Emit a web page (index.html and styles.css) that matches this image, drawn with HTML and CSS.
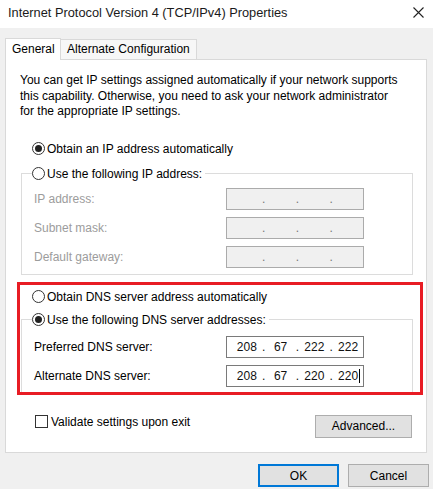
FILE: index.html
```html
<!DOCTYPE html>
<html>

<head>
    <meta charset="utf-8" />
    <title>Internet Protocol Version 4 (TCP/IPv4) Properties</title>
    <link rel="stylesheet" href="styles.css">
</head>

<body>
    <div class="window">
        <div class="titlebar">
            <span class="title">Internet Protocol Version 4 (TCP/IPv4) Properties</span>
            <svg class="close" width="11" height="11" viewBox="0 0 11 11">
                <path d="M0.5 0.5 L10.5 10.5 M10.5 0.5 L0.5 10.5" stroke="#222" stroke-width="1.1" fill="none" />
            </svg>
        </div>

        <div class="tabs">
            <div class="tab active">General</div>
            <div class="tab">Alternate Configuration</div>
        </div>

        <div class="panel">
            <p class="intro">You can get IP settings assigned automatically if your network supports this capability. Otherwise, you need to ask your network administrator for the appropriate IP settings.</p>

            <label class="radio standalone"><span class="mark checked"></span>Obtain an IP address automatically</label>

            <fieldset class="group">
                <legend><label class="radio"><span class="mark"></span>Use the following IP address:</label></legend>
                <div class="field disabled">
                    <span class="name">IP address:</span>
                    <div class="ipbox"><span class="oct"></span><span class="dot">.</span><span class="oct"></span><span class="dot">.</span><span class="oct"></span><span class="dot">.</span><span class="oct"></span></div>
                </div>
                <div class="field disabled">
                    <span class="name">Subnet mask:</span>
                    <div class="ipbox"><span class="oct"></span><span class="dot">.</span><span class="oct"></span><span class="dot">.</span><span class="oct"></span><span class="dot">.</span><span class="oct"></span></div>
                </div>
                <div class="field disabled">
                    <span class="name">Default gateway:</span>
                    <div class="ipbox"><span class="oct"></span><span class="dot">.</span><span class="oct"></span><span class="dot">.</span><span class="oct"></span><span class="dot">.</span><span class="oct"></span></div>
                </div>
            </fieldset>

            <label class="radio standalone dns"><span class="mark"></span>Obtain DNS server address automatically</label>

            <fieldset class="group dns-group">
                <legend><label class="radio"><span class="mark checked"></span>Use the following DNS server addresses:</label></legend>
                <div class="field">
                    <span class="name">Preferred DNS server:</span>
                    <div class="ipbox"><span class="oct">208</span><span class="dot">.</span><span class="oct">67</span><span class="dot">.</span><span class="oct">222</span><span class="dot">.</span><span class="oct">222</span></div>
                </div>
                <div class="field">
                    <span class="name">Alternate DNS server:</span>
                    <div class="ipbox"><span class="oct">208</span><span class="dot">.</span><span class="oct">67</span><span class="dot">.</span><span class="oct">220</span><span class="dot">.</span><span class="oct"><span class="caret">220</span></span></div>
                </div>
            </fieldset>

            <div class="footer">
                <label class="check"><span class="box"></span>Validate settings upon exit</label>
                <button class="btn advanced">Advanced...</button>
            </div>

            <!-- annotation drawn over the DNS section -->
            <div class="highlight"></div>
        </div>

        <div class="actions">
            <button class="btn default">OK</button>
            <button class="btn">Cancel</button>
        </div>
    </div>
</body>

</html>
```

FILE: styles.css
```css
* {
    box-sizing: border-box;
}

body {
    margin: 0;
    background: #f0f0f0;
    font-family: "Liberation Sans", Arial, sans-serif;
    font-size: 12px;
    color: #000;
}

.window {
    width: 433px;
    height: 489px;
    overflow: hidden;
}

.titlebar {
    height: 28px;
    background: #fff;
    display: flex;
    align-items: center;
    justify-content: space-between;
    padding: 0 9px 3px 8px;
}

.title {
    font-size: 12.8px;
    color: #1a1a1a;
}

.tabs {
    display: flex;
    align-items: flex-end;
    height: 31px;
    padding-left: 5px;
}

.tab {
    height: 20px;
    padding: 0 6px;
    line-height: 19px;
    border: 1px solid #d9d9d9;
    border-bottom: none;
    background: #f7f7f7;
    margin-bottom: -1px;
    position: relative;
}

.tab.active {
    height: 22px;
    line-height: 20px;
    background: #fff;
    padding: 0 6px;
    z-index: 1;
    width: 56px;
}

.tab+.tab {
    border-left: none;
    height: 20px;
    margin-bottom: 0;
}

.panel {
    position: relative;
    margin: 0 6px 0 5px;
    height: 394px;
    background: #fff;
    border: 1px solid #d9d9d9;
    padding: 13px 13px 0 14px;
}

.intro {
    margin: 0;
    width: 382px;
    line-height: 15.5px;
}

.radio {
    display: flex;
    align-items: center;
    height: 16px;
    line-height: 16px;
    white-space: nowrap;
}

.radio.standalone {
    margin: 21px 0 0 12px;
}

.radio.dns {
    margin-top: 14px;
}

.mark {
    width: 13px;
    height: 13px;
    border: 1px solid #333;
    border-radius: 50%;
    margin-right: 2px;
    display: flex;
    align-items: center;
    justify-content: center;
    background: #fff;
}

.mark.checked::after {
    content: "";
    width: 7px;
    height: 7px;
    border-radius: 50%;
    background: #222;
}

.group {
    margin: 9px 0 0 1px;
    padding: 6px 12px 6px 12px;
    border: 1px solid #dcdcdc;
    min-width: 0;
}

.group legend {
    padding: 0 3px 0 0;
    margin-left: -2px;
}

.dns-group {
    margin-top: 7px;
    padding-top: 8px;
}

.field {
    display: flex;
    align-items: center;
    height: 22px;
}

.field+.field {
    margin-top: 7px;
}

.field .name {
    width: 192px;
    color: #000;
}

.field.disabled .name {
    color: #9c9c9c;
}

.ipbox {
    width: 138px;
    height: 22px;
    border: 1px solid #7a7a7a;
    background: #fff;
    display: flex;
    align-items: center;
    padding-left: 5px;
    color: #111;
}

.field.disabled .ipbox {
    border-color: #ababab;
    background: #f0f0f0;
    color: #777;
}

.oct {
    width: 30px;
    text-align: center;
}

.dot {
    width: 4px;
    text-align: center;
}

.caret {
    position: relative;
}

.caret::after {
    content: "";
    position: absolute;
    left: 100%;
    margin-left: 1px;
    top: 0;
    height: 14px;
    border-left: 1px solid #000;
}

.footer {
    display: flex;
    justify-content: space-between;
    align-items: flex-start;
    margin-top: 20px;
}

.check {
    display: flex;
    align-items: center;
    height: 16px;
    margin-left: 15px;
}

.box {
    width: 13px;
    height: 13px;
    border: 1px solid #333;
    margin-right: 3px;
    background: #fff;
}

.btn {
    font-family: inherit;
    font-size: 12px;
    color: #000;
    height: 23px;
    background: #e1e1e1;
    border: 1px solid #adadad;
    padding: 0;
}

.advanced {
    width: 97px;
    margin-top: 1px;
    margin-right: 1px;
}

.highlight {
    position: absolute;
    left: 11px;
    top: 222px;
    width: 406px;
    height: 113px;
    border: 3px solid #e81c24;
    pointer-events: none;
}

.actions {
    display: flex;
    justify-content: flex-end;
    gap: 9px;
    margin-top: 11px;
    padding-right: 4px;
}

.actions .btn {
    width: 81px;
}

.btn.default {
    border: 2px solid #0078d7;
}
```
